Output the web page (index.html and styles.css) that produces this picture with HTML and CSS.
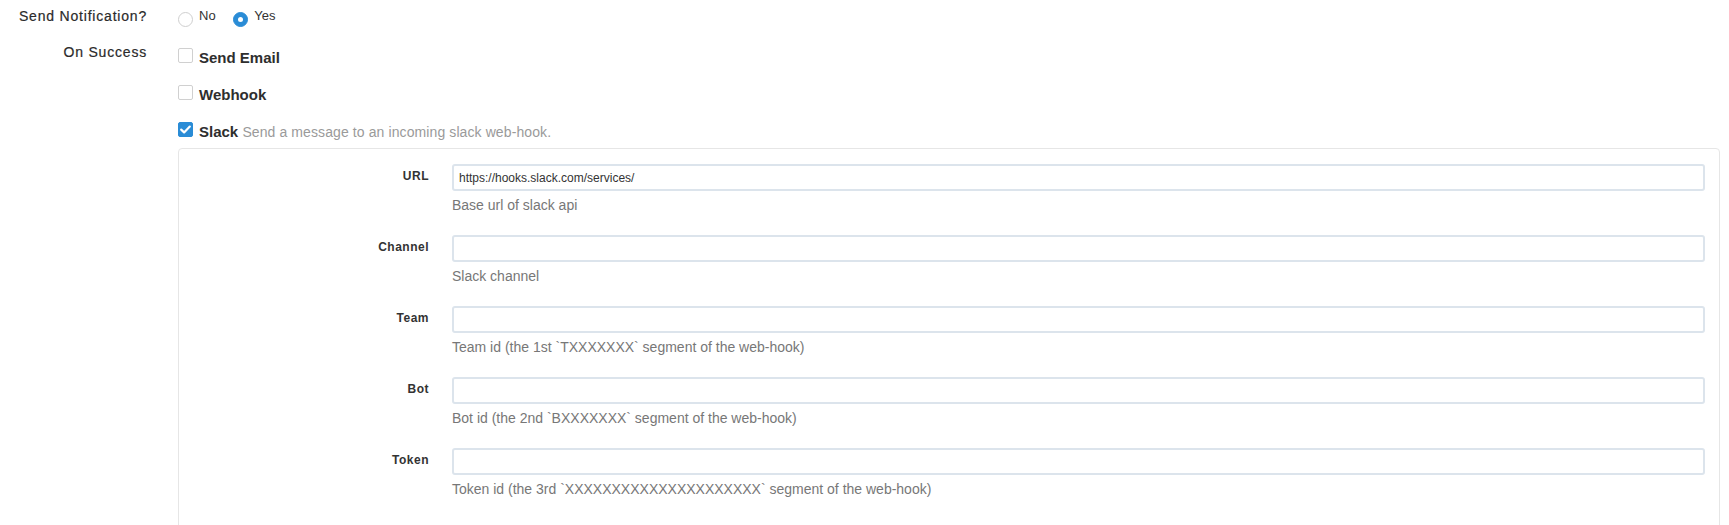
FILE: index.html
```html
<!DOCTYPE html>
<html lang="en">
<head>
<meta charset="utf-8">
<title>Notification settings</title>
<link rel="stylesheet" href="styles.css">
</head>
<body>
<form class="form">
  <div class="row row-notify">
    <div class="lbl">Send Notification?</div>
    <div class="ctrl radios">
      <span class="radio"></span><span class="rtext rtext-no">No</span>
      <span class="radio on"></span><span class="rtext">Yes</span>
    </div>
  </div>
  <div class="row row-success">
    <div class="lbl">On Success</div>
    <div class="ctrl checks">
      <div class="check-item"><span class="box"></span><span class="ctext">Send Email</span></div>
      <div class="check-item"><span class="box"></span><span class="ctext">Webhook</span></div>
      <div class="check-item last"><span class="box on"><svg class="tick" viewBox="0 0 15 15" width="15" height="15"><path d="M3.2 7.6 L6.1 10.4 L11.8 4.6" fill="none" stroke="#fff" stroke-width="2.2" stroke-linecap="round" stroke-linejoin="round"/></svg></span><span class="ctext">Slack</span> <span class="desc">Send a message to an incoming slack web-hook.</span></div>
      <div class="panel">
        <div class="field">
          <div class="flbl">URL</div>
          <div class="fctrl">
            <input class="inp" type="text" value="https://hooks.slack.com/services/">
            <div class="help">Base url of slack api</div>
          </div>
        </div>
        <div class="field">
          <div class="flbl">Channel</div>
          <div class="fctrl">
            <input class="inp" type="text" value="">
            <div class="help">Slack channel</div>
          </div>
        </div>
        <div class="field">
          <div class="flbl">Team</div>
          <div class="fctrl">
            <input class="inp" type="text" value="">
            <div class="help">Team id (the 1st `TXXXXXXX` segment of the web-hook)</div>
          </div>
        </div>
        <div class="field">
          <div class="flbl">Bot</div>
          <div class="fctrl">
            <input class="inp" type="text" value="">
            <div class="help">Bot id (the 2nd `BXXXXXXX` segment of the web-hook)</div>
          </div>
        </div>
        <div class="field">
          <div class="flbl">Token</div>
          <div class="fctrl">
            <input class="inp" type="text" value="">
            <div class="help">Token id (the 3rd `XXXXXXXXXXXXXXXXXXXXX` segment of the web-hook)</div>
          </div>
        </div>
      </div>
    </div>
  </div>
</form>
</body>
</html>
```

FILE: styles.css
```css
html, body {
  margin: 0;
  padding: 0;
  background: #fff;
}

body {
  font-family: "Liberation Sans", Arial, Helvetica, sans-serif;
  color: #333;
  font-size: 14px;
}

.form {
  padding: 6px 9px 0 0;
}

.row {
  display: grid;
  grid-template-columns: 178px 1fr;
  align-items: start;
}

.row-notify {
  margin-bottom: 15px;
}

.lbl {
  box-sizing: border-box;
  padding-right: 31px;
  text-align: right;
  font-size: 14px;
  line-height: 20px;
  letter-spacing: 0.8px;
  color: #2b2b2b;
  -webkit-text-stroke: 0.2px #2b2b2b;
}

.radios {
  font-size: 13px;
  line-height: 20px;
  white-space: nowrap;
}

.radio {
  display: inline-block;
  box-sizing: border-box;
  width: 15px;
  height: 15px;
  border: 1px solid #cfcfcf;
  border-radius: 50%;
  background: #fff;
  vertical-align: -7px;
  margin-right: 6px;
  position: relative;
}

.radio.on {
  background: #2a8cd6;
  border-color: #2a8cd6;
}

.radio.on::after {
  content: "";
  position: absolute;
  left: 4px;
  top: 4px;
  width: 5px;
  height: 5px;
  border-radius: 50%;
  background: #fff;
}

.rtext {
  color: #333;
}

.rtext-no {
  margin-right: 14px;
}

.checks {
  padding-top: 6px;
}

.check-item {
  font-size: 15px;
  line-height: 20px;
  height: 20px;
  margin-bottom: 17px;
  white-space: nowrap;
}

.check-item.last {
  margin-bottom: 6px;
}

.box {
  display: inline-block;
  box-sizing: border-box;
  width: 15px;
  height: 15px;
  border: 1px solid #d0d0d0;
  border-radius: 2px;
  background: #fff;
  vertical-align: baseline;
  margin-right: 6px;
  position: relative;
}

.box.on {
  background: #2a8cd6;
  border-color: #2a8cd6;
}

.tick {
  position: absolute;
  left: -1px;
  top: -1px;
}

.ctext {
  font-weight: bold;
  color: #2e2e2e;
}

.desc {
  font-size: 14px;
  letter-spacing: 0.1px;
  color: #9a9a9a;
}

.panel {
  border: 1px solid #e6e6e6;
  border-radius: 4px;
  padding: 15px 14px 30px 0;
}

.field {
  display: grid;
  grid-template-columns: 250px 1fr;
  column-gap: 23px;
  margin-bottom: 20px;
}

.flbl {
  text-align: right;
  font-size: 12px;
  font-weight: bold;
  letter-spacing: 0.5px;
  line-height: 17px;
  padding-top: 4px;
  color: #333;
}

.inp {
  display: block;
  box-sizing: border-box;
  width: 100%;
  height: 27px;
  margin: 0;
  padding: 0 5px;
  border: 2px solid #dce4ec;
  border-radius: 3px;
  font-family: "Liberation Sans", Arial, sans-serif;
  font-size: 12px;
  color: #333;
  background: #fff;
  outline: none;
}

.help {
  margin-top: 4px;
  font-size: 14px;
  line-height: 20px;
  color: #777;
}
```
